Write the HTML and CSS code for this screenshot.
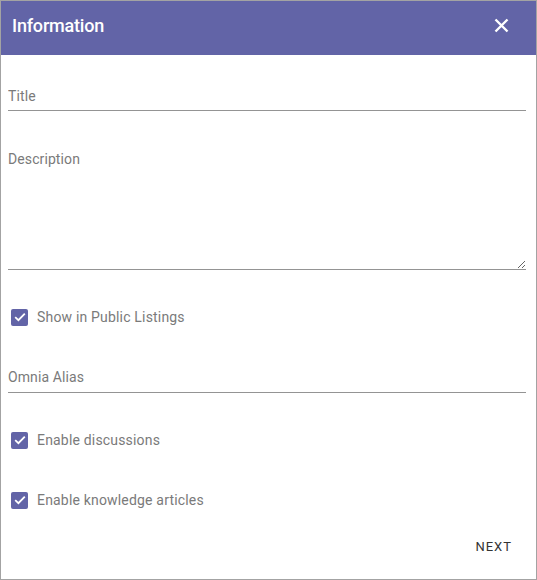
FILE: index.html
```html
<!DOCTYPE html>
<html>
<head>
<meta charset="utf-8">
<link rel="stylesheet" href="styles.css">
</head>
<body>
<div class="dialog">
  <div class="header">
    <h1 class="title">Information</h1>
    <button class="close" aria-label="Close">
      <svg width="15" height="15" viewBox="0 0 15 15"><path d="M1.5 1.5L13.5 13.5M13.5 1.5L1.5 13.5" stroke="#fff" stroke-width="2.4" stroke-linecap="butt"/></svg>
    </button>
  </div>
  <div class="content">
    <input class="field field-title" type="text" placeholder="Title">
    <textarea class="field field-desc" placeholder="Description"></textarea>
    <label class="check check-public"><span class="box"><svg width="12" height="10" viewBox="0 0 12 10"><path d="M1.2 5.2L4.4 8.2L10.8 1.6" fill="none" stroke="#fff" stroke-width="1.8"/></svg></span>Show in Public Listings</label>
    <input class="field field-alias" type="text" placeholder="Omnia Alias">
    <label class="check check-disc"><span class="box"><svg width="12" height="10" viewBox="0 0 12 10"><path d="M1.2 5.2L4.4 8.2L10.8 1.6" fill="none" stroke="#fff" stroke-width="1.8"/></svg></span>Enable discussions</label>
    <label class="check check-know"><span class="box"><svg width="12" height="10" viewBox="0 0 12 10"><path d="M1.2 5.2L4.4 8.2L10.8 1.6" fill="none" stroke="#fff" stroke-width="1.8"/></svg></span>Enable knowledge articles</label>
    <div class="actions"><button class="next">NEXT</button></div>
  </div>
</div>
</body>
</html>
```
FILE: styles.css
```css
* { box-sizing: border-box; }
html, body { margin: 0; padding: 0; background: #fff; }
body { font-family: Roboto, "Noto Sans", Arial, sans-serif; }
.dialog {
  width: 537px;
  height: 580px;
  border: 1px solid #a3a3a3;
  display: flex;
  flex-direction: column;
  background: #fff;
}
.header {
  height: 54px;
  background: #6264a7;
  display: flex;
  align-items: center;
  justify-content: space-between;
  padding: 0 27px 6px 11px;
}
.title {
  margin: 0;
  color: #fff;
  font-size: 18px;
  font-weight: 500;
  letter-spacing: -0.2px;
}
.close {
  border: 0;
  background: transparent;
  padding: 0;
  width: 15px;
  height: 15px;
  display: flex;
  cursor: pointer;
}
.content {
  padding: 0 10px 0 7px;
  display: flex;
  flex-direction: column;
}
.field {
  display: block;
  width: 100%;
  border: 0;
  border-bottom: 1px solid #949494;
  outline: none;
  font-family: Roboto, "Noto Sans", Arial, sans-serif;
  font-size: 14px;
  line-height: 20px;
  letter-spacing: 0.1px;
  color: #333;
  padding: 0 0 4px 0;
  background: transparent;
}
.field::placeholder { color: #7a7a7a; opacity: 1; }
.field-title { margin-top: 31px; height: 25px; }
.field-desc { margin-top: 38px; height: 121px; resize: vertical; }
.field-alias { margin-top: 40px; height: 26px; padding-bottom: 5px; }
.check {
  display: flex;
  align-items: center;
  height: 20px;
  font-size: 14px;
  letter-spacing: 0.18px;
  color: #7a7a7a;
  padding-left: 3px;
}
.check-public { margin-top: 37px; }
.check-disc { margin-top: 37px; }
.check-know { margin-top: 40px; }
.box {
  width: 17px;
  height: 17px;
  border-radius: 2px;
  background: #6264a7;
  display: flex;
  align-items: center;
  justify-content: center;
  margin-right: 9px;
}
.actions {
  display: flex;
  justify-content: flex-end;
  margin-top: 23px;
}
.next {
  border: 0;
  background: transparent;
  font-family: Roboto, "Noto Sans", Arial, sans-serif;
  font-size: 13px;
  letter-spacing: 1px;
  color: #333;
  padding: 6px 14px 6px 8px;
  line-height: 16px;
}
```
